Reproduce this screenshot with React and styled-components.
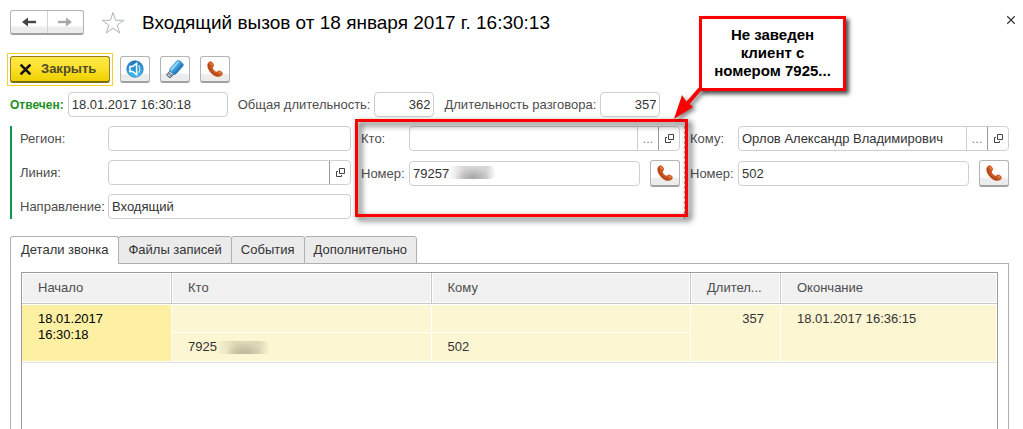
import React from "react";
import styled, { createGlobalStyle, css } from "styled-components";

const GlobalStyle = createGlobalStyle`
  *, *::before, *::after { box-sizing: border-box; }
  body {
    margin: 0;
    background: #fff;
    color: #333;
    font: 13px/16px "Liberation Sans", Arial, sans-serif;
  }
  button, input { font: inherit; color: inherit; }
`;

const Page = styled.main`
  display: flex;
  flex-direction: column;
  min-height: 100vh;
  padding: 10px 14px 0 10px;
  overflow: hidden;
`;

const Header = styled.header`
  display: flex;
  align-items: center;
  height: 25px;
`;

const raised = css`
  border: 1px solid #b4b4b4;
  border-bottom: 2px solid #a0a0a0;
  border-radius: 3px;
  background: linear-gradient(#fff 65%, #ececec 75%);
`;

const NavGroup = styled.nav`
  ${raised}
  display: flex;
  width: 74px;
  height: 25px;
`;

const NavButton = styled.button`
  flex: 1;
  display: grid;
  place-items: center;
  padding: 0;
  border: 0;
  background: none;
  color: ${(p) => (p.$muted ? "#a8a8a8" : "#444")};
  & + & { border-left: 1px solid #d4d4d4; }
`;

const PlainButton = styled.button`
  display: grid;
  place-items: center;
  padding: 0;
  border: 0;
  background: none;
`;

const StarButton = styled(PlainButton)`
  margin: 0 17px;
`;

const CloseCross = styled(PlainButton)`
  margin: 0 -10px 6px auto;
  width: 16px;
  height: 16px;
`;

const Title = styled.h1`
  margin: 0;
  font-size: 19px;
  line-height: 24px;
  font-weight: 400;
  color: #000;
  white-space: nowrap;
`;

const Toolbar = styled.div`
  display: flex;
  gap: 10px;
  margin-top: 21px;
`;

const DefaultAction = styled.div`
  margin: -3px;
  padding: 2px;
  border: 1px solid #f5cf2e;
`;

const CloseButton = styled.button`
  display: flex;
  align-items: center;
  gap: 9px;
  width: 100px;
  height: 27px;
  padding: 0 8px;
  border: 1px solid #8f7d1c;
  border-bottom: 2px solid #7a6a12;
  border-radius: 3px;
  background: linear-gradient(#ffe84a, #fbe02a 50%, #edd000);
  color: #4f4a2a;
  font-weight: 700;
  svg { color: #111; }
`;

const IconButton = styled.button`
  ${raised}
  flex: none;
  display: grid;
  place-items: center;
  width: 30px;
  height: 27px;
  padding: 0;
`;

const Summary = styled.div`
  display: flex;
  align-items: center;
  gap: 10px;
  margin-top: 9px;
`;

const Pair = styled.div`
  display: flex;
  align-items: center;
  gap: 4px;
`;

const Label = styled.label`
  color: ${(p) => (p.$answered ? "#1f9024" : "#4d4d4d")};
  font-size: ${(p) => (p.$answered ? "12px" : "13px")};
  font-weight: ${(p) => (p.$answered ? 700 : 400)};
  white-space: nowrap;
`;

const Box = styled.div`
  position: relative;
  display: flex;
  flex: ${(p) => (p.$width ? "none" : "1")};
  width: ${(p) => (p.$width ? `${p.$width}px` : "auto")};
  min-width: 0;
  height: 25px;
  border: 1px solid #cfcfcf;
  border-radius: 4px;
  background: #fff;
`;

const Input = styled.input`
  flex: 1;
  min-width: 0;
  width: 100%;
  padding: 0 3px;
  border: 0;
  outline: 0;
  background: none;
  text-align: ${(p) => (p.$number ? "right" : "left")};
`;

const Addon = styled.button`
  flex: none;
  display: grid;
  place-items: center;
  width: 21px;
  padding: 0;
  border: 0;
  border-left: 1px solid ${(p) => (p.$strong ? "#9a9a9a" : "#cfcfcf")};
  background: none;
  color: #8a8a8a;
`;

const Form = styled.div`
  display: grid;
  grid-template-columns: 341fr 319fr 319fr;
  gap: 10px;
  margin-top: 9px;
`;

const Group = styled.section`
  position: relative;
  display: flex;
  flex-direction: column;
  gap: 9px;
  min-width: 0;
  ${(p) => p.$marked && css`
    padding-left: 8px;
    border-left: 2px solid #0a9a4a;
  `}
  ${(p) => p.$divided && css`
    &::after {
      content: "";
      position: absolute;
      top: 0;
      bottom: 0;
      right: -5px;
      border-right: 1px dashed #b0b0b0;
    }
  `}
`;

const FormRow = styled.div`
  display: grid;
  grid-template-columns: ${(p) => p.$label}px minmax(0, 1fr) auto;
  align-items: center;
`;

const CallSlot = styled.div`
  display: flex;
  padding-left: 10px;
`;

const Smudge = styled.span`
  position: absolute;
  left: ${(p) => p.$left}px;
  top: ${(p) => p.$top}px;
  width: ${(p) => p.$width}px;
  height: 13px;
  border-radius: 0 6px 6px 0;
  background:
    radial-gradient(ellipse 18px 10px at 52% 90%, ${(p) => p.$dark}, transparent),
    linear-gradient(90deg, transparent, ${(p) => p.$light} 35%, ${(p) => p.$light} 80%, transparent);
`;

const RedFrame = styled.div`
  position: absolute;
  z-index: 1;
  inset: -7px -8px 2px -6px;
  border: 3px solid #fb0000;
  filter: drop-shadow(3px 3px 3px rgba(0, 0, 0, 0.8));
  pointer-events: none;
`;

const Callout = styled.aside`
  position: absolute;
  z-index: 2;
  top: -110px;
  right: -166px;
  width: 147px;
  padding: 7px 8px 8px;
  border: 3px solid #fb0000;
  background: #fff;
  box-shadow: 3px 3px 4px rgba(0, 0, 0, 0.7);
  color: #000;
  font-size: 15px;
  line-height: 18px;
  font-weight: 700;
  text-align: center;
`;

const Arrow = styled.svg`
  position: absolute;
  z-index: 3;
  top: -41px;
  right: -28px;
  filter: drop-shadow(3px 2px 2px rgba(0, 0, 0, 0.5));
  pointer-events: none;
`;

const Tabs = styled.div`
  position: relative;
  display: flex;
  margin: 17px 0 -1px;
`;

const Tab = styled.button`
  height: 28px;
  padding: 0 9px 1px;
  border: 1px solid #b0b0b0;
  border-bottom-color: ${(p) => (p.$active ? "#fff" : "#b0b0b0")};
  border-radius: 3px 3px 0 0;
  background: ${(p) => (p.$active ? "#fff" : "#ebebeb")};
  white-space: nowrap;
  &:first-child { padding: 0 10px 1px; }
  & + & { margin-left: -1px; }
`;

const Panel = styled.div`
  flex: 1;
  display: flex;
  min-height: 166px;
  padding: 8px 10px 0;
  border: 1px solid #b0b0b0;
  border-bottom: 0;
`;

const TableFrame = styled.div`
  flex: 1;
  min-width: 0;
  border: 1px solid #9c9c9c;
  border-bottom: 0;
`;

const Table = styled.table`
  width: 100%;
  table-layout: fixed;
  border-collapse: separate;
  border-spacing: 0;
  border-bottom: 1px solid #e0e0e0;
`;

const Col = styled.col`
  width: ${(p) => (p.$width ? `${p.$width}px` : "auto")};
`;

const Th = styled.th`
  height: 31px;
  padding: 0 16px;
  border-right: 1px solid #c8c8c8;
  border-bottom: 1px solid #c8c8c8;
  background: #f1f1f1;
  box-shadow: inset 0 0 0 1px #fff;
  color: #4d4d4d;
  font-weight: 400;
  text-align: left;
  white-space: nowrap;
  &:last-child { border-right: 0; }
`;

const Td = styled.td`
  position: relative;
  height: 29px;
  padding: 6px 16px 0;
  border: 1px solid #fff;
  border-left: 0;
  border-top-width: ${(p) => (p.$lower ? "0" : "1px")};
  background: ${(p) => (p.$current ? "#fdf0a3" : "#fdf6d2")};
  color: ${(p) => (p.$current ? "#000" : "#333")};
  text-align: ${(p) => (p.$number ? "right" : "left")};
  vertical-align: top;
`;

const ArrowIcon = ({ right }) => (
  <svg width="16" height="12" viewBox="0 0 16 12" fill="none" stroke="currentColor" strokeWidth="2.4">
    {right ? <path d="M1 6H12" /> : <path d="M15 6H4" />}
    {right ? (
      <path d="M9 1.5L15 6L9 10.5Z" fill="currentColor" stroke="none" />
    ) : (
      <path d="M7 1.5L1 6L7 10.5Z" fill="currentColor" stroke="none" />
    )}
  </svg>
);

const StarIcon = () => (
  <svg width="24" height="24" viewBox="0 0 24 24" fill="#fff" stroke="#aeb4b8" strokeWidth="1">
    <path d="M12 1.5L14.6 9.3H22.8L16.2 14.1L18.7 22L12 17.1L5.3 22L7.8 14.1L1.2 9.3H9.4Z" />
  </svg>
);

const CrossIcon = ({ size, width }) => (
  <svg width={size} height={size} viewBox="0 0 12 12" fill="none" stroke="currentColor" strokeWidth={width}>
    <path d="M1.5 1.5L10.5 10.5M10.5 1.5L1.5 10.5" />
  </svg>
);

const SpeakerIcon = () => (
  <svg width="18" height="18" viewBox="0 0 18 18">
    <defs>
      <linearGradient id="speaker" x1="0" y1="0" x2="0" y2="1">
        <stop offset="0" stopColor="#1f74bc" />
        <stop offset="1" stopColor="#3fc4f6" />
      </linearGradient>
    </defs>
    <circle cx="9" cy="9" r="8.2" fill="url(#speaker)" stroke="#2878b4" strokeWidth=".8" />
    <path d="M4 6.6H6.6L10.6 3.4V14.6L6.6 11.4H4Z" fill="#2b93d8" stroke="#fff" strokeWidth="1.5" />
    <path d="M12.6 5.2Q15.2 9 12.6 12.8" fill="none" stroke="#bfe6fb" strokeWidth="1.2" />
  </svg>
);

const UsbIcon = () => (
  <svg width="18" height="18" viewBox="0 0 18 18">
    <defs>
      <linearGradient id="stick" x1="0" y1="0" x2="0" y2="1">
        <stop offset="0" stopColor="#7cccf6" />
        <stop offset=".5" stopColor="#3f9fdd" />
        <stop offset="1" stopColor="#1668b0" />
      </linearGradient>
    </defs>
    <g transform="rotate(-48 9 9)">
      <rect x="-1" y="6.6" width="6" height="4.8" fill="#cdd3d9" stroke="#5d6873" strokeWidth="1" />
      <rect x="4" y="5" width="14.4" height="8" rx="2.6" fill="url(#stick)" stroke="#2f7fbd" strokeWidth=".6" />
      <path d="M6 6.8H16" stroke="#a4defc" strokeWidth="1.2" />
      <path d="M.8 8H2.4M.8 10H2.4" stroke="#3f4852" strokeWidth="1" />
    </g>
  </svg>
);

const PhoneIcon = () => (
  <svg width="18" height="18" viewBox="0 0 18 18">
    <path
      d="M4 1.4C1.2 2.2 .7 5.4 2.2 8.9C4.1 13.2 8.2 16.6 12.2 16.8C14.8 16.9 16.7 15.4 16.8 13.6C16.7 12.3 14.2 10.4 12.8 10.5C11.6 10.6 11.4 12 10.4 11.8C8.9 11.4 7.1 9.5 6.8 8C6.7 7 8.1 6.5 8 5.2C7.9 3.8 5.6 .9 4 1.4Z"
      fill="#c9571f"
    />
    <path d="M2.6 4.2C2.6 9.4 7.2 15 12.4 15.8" fill="none" stroke="#9c3f1a" strokeWidth="1" />
    <path d="M4.4 2.8L6.7 5.6M12.6 11.8L15.4 13.8" fill="none" stroke="#e98a4c" strokeWidth="1.2" />
  </svg>
);

const OpenIcon = () => (
  <svg width="9" height="9" viewBox="0 0 9 9" fill="none" stroke="#444" strokeWidth="1">
    <path d="M3.5 .5H8.5V5.5H3.5ZM2 3.5H.5V8.5H5.5V7" />
  </svg>
);

function Field({ id, value = "", width, number, choose, open, hidden }) {
  return (
    <Box $width={width}>
      <Input id={id} defaultValue={value} $number={number} />
      {choose && <Addon type="button" aria-label="Выбрать">...</Addon>}
      {open && (
        <Addon type="button" aria-label="Открыть" $strong>
          <OpenIcon />
        </Addon>
      )}
      {hidden && <Smudge $left={38} $top={4} $width={48} $dark="#a6a6a6" $light="#d4d4d4" />}
    </Box>
  );
}

function Row({ id, label, labelWidth, call, ...field }) {
  return (
    <FormRow $label={labelWidth}>
      <Label htmlFor={id}>{label}</Label>
      <Field id={id} {...field} />
      {call && (
        <CallSlot>
          <IconButton type="button" aria-label="Позвонить">
            <PhoneIcon />
          </IconButton>
        </CallSlot>
      )}
    </FormRow>
  );
}

const tabs = ["Детали звонка", "Файлы записей", "События", "Дополнительно"];

export default function App() {
  return (
    <Page>
      <GlobalStyle />
      <Header>
        <NavGroup>
          <NavButton type="button" aria-label="Назад"><ArrowIcon /></NavButton>
          <NavButton type="button" aria-label="Вперёд" $muted><ArrowIcon right /></NavButton>
        </NavGroup>
        <StarButton type="button" aria-label="В избранное"><StarIcon /></StarButton>
        <Title>Входящий вызов от 18 января 2017 г. 16:30:13</Title>
        <CloseCross type="button" aria-label="Закрыть окно"><CrossIcon size={10} width={1.3} /></CloseCross>
      </Header>

      <Toolbar>
        <DefaultAction>
          <CloseButton type="button">
            <CrossIcon size={13} width={2.4} />
            Закрыть
          </CloseButton>
        </DefaultAction>
        <IconButton type="button" aria-label="Прослушать"><SpeakerIcon /></IconButton>
        <IconButton type="button" aria-label="Сохранить на носитель"><UsbIcon /></IconButton>
        <IconButton type="button" aria-label="Позвонить"><PhoneIcon /></IconButton>
      </Toolbar>

      <Summary>
        <Pair>
          <Label htmlFor="answered" $answered>Отвечен:</Label>
          <Field id="answered" value="18.01.2017 16:30:18" width={160} />
        </Pair>
        <Pair>
          <Label htmlFor="total">Общая длительность:</Label>
          <Field id="total" value="362" width={60} number />
        </Pair>
        <Pair>
          <Label htmlFor="talk">Длительность разговора:</Label>
          <Field id="talk" value="357" width={60} number />
        </Pair>
      </Summary>

      <Form>
        <Group $marked>
          <Row id="region" label="Регион:" labelWidth={88} />
          <Row id="line" label="Линия:" labelWidth={88} open />
          <Row id="direction" label="Направление:" labelWidth={88} value="Входящий" />
        </Group>
        <Group $divided>
          <Row id="from" label="Кто:" labelWidth={48} choose open />
          <Row id="from-number" label="Номер:" labelWidth={48} value="79257" hidden call />
          <RedFrame />
          <Callout>Не заведен клиент с номером 7925...</Callout>
          <Arrow width="36" height="36" viewBox="0 0 36 36">
            <path d="M28 4L15 19" stroke="#fb0000" strokeWidth="4" />
            <path d="M2 34L10 10L14 16L21 22Z" fill="#fb0000" />
          </Arrow>
        </Group>
        <Group>
          <Row id="to" label="Кому:" labelWidth={48} value="Орлов Александр Владимирович" choose open />
          <Row id="to-number" label="Номер:" labelWidth={48} value="502" call />
        </Group>
      </Form>

      <Tabs role="tablist">
        {tabs.map((name, i) => (
          <Tab key={name} type="button" role="tab" aria-selected={i === 0} $active={i === 0}>
            {name}
          </Tab>
        ))}
      </Tabs>
      <Panel role="tabpanel">
        <TableFrame>
          <Table>
            <colgroup>
              <Col $width={150} />
              <Col />
              <Col />
              <Col $width={90} />
              <Col $width={216} />
            </colgroup>
            <thead>
              <tr>
                <Th>Начало</Th>
                <Th>Кто</Th>
                <Th>Кому</Th>
                <Th title="Длительность">Длител...</Th>
                <Th>Окончание</Th>
              </tr>
            </thead>
            <tbody>
              <tr>
                <Td rowSpan={2} $current>18.01.2017<br />16:30:18</Td>
                <Td />
                <Td />
                <Td rowSpan={2} $number>357</Td>
                <Td rowSpan={2}>18.01.2017 16:36:15</Td>
              </tr>
              <tr>
                <Td $lower>
                  7925
                  <Smudge $left={44} $top={8} $width={54} $dark="#bdb79c" $light="#ddd7b6" />
                </Td>
                <Td $lower>502</Td>
              </tr>
            </tbody>
          </Table>
        </TableFrame>
      </Panel>
    </Page>
  );
}
